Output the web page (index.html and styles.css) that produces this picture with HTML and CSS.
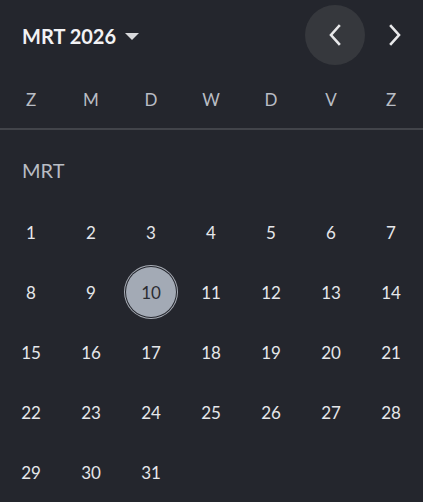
FILE: index.html
```html
<!DOCTYPE html>
<html>
<head>
<meta charset="utf-8">
<link rel="stylesheet" href="styles.css">
</head>
<body>
<div class="cal">
  <div class="header">
    <div class="title">MRT 2026 <span class="caret"></span></div>
    <div class="nav">
      <button class="navbtn prev" aria-label="vorige">
        <svg width="14" height="22" viewBox="0 0 14 22"><path d="M11 2 L3 11 L11 20" fill="none" stroke="#e8e8ea" stroke-width="2.6" stroke-linecap="square"/></svg>
      </button>
      <button class="navbtn next" aria-label="volgende">
        <svg width="14" height="22" viewBox="0 0 14 22"><path d="M3 2 L11 11 L3 20" fill="none" stroke="#e8e8ea" stroke-width="2.6" stroke-linecap="square"/></svg>
      </button>
    </div>
  </div>
  <div class="weekdays">
    <span>Z</span><span>M</span><span>D</span><span>W</span><span>D</span><span>V</span><span>Z</span>
  </div>
  <div class="month-label">MRT</div>
  <div class="days">
    <span class="day">1</span><span class="day">2</span><span class="day">3</span><span class="day">4</span><span class="day">5</span><span class="day">6</span><span class="day">7</span>
    <span class="day">8</span><span class="day">9</span><span class="day selected"><span class="dot">10</span></span><span class="day">11</span><span class="day">12</span><span class="day">13</span><span class="day">14</span>
    <span class="day">15</span><span class="day">16</span><span class="day">17</span><span class="day">18</span><span class="day">19</span><span class="day">20</span><span class="day">21</span>
    <span class="day">22</span><span class="day">23</span><span class="day">24</span><span class="day">25</span><span class="day">26</span><span class="day">27</span><span class="day">28</span>
    <span class="day">29</span><span class="day">30</span><span class="day">31</span>
  </div>
</div>
</body>
</html>
```
FILE: styles.css
```css
html, body {
  margin: 0;
  padding: 0;
  background: #24262d;
  overflow: hidden;
}
.cal {
  width: 423px;
  height: 502px;
  font-family: Lato, "Noto Sans", sans-serif;
  color: #e6e7ea;
}
.header {
  height: 70px;
  display: flex;
  align-items: center;
  justify-content: space-between;
  padding-left: 22px;
  margin-right: -2px;
}
.title {
  font-size: 20px;
  font-weight: 700;
  color: #f2f2f4;
  display: flex;
  align-items: center;
  gap: 9px;
  margin-top: 2px;
}
.caret {
  width: 0;
  height: 0;
  border-left: 7px solid transparent;
  border-right: 7px solid transparent;
  border-top: 7px solid #d8d9dc;
  margin-top: 1px;
}
.nav {
  display: flex;
}
.navbtn {
  width: 60px;
  height: 60px;
  border: none;
  border-radius: 50%;
  background: transparent;
  display: flex;
  align-items: center;
  justify-content: center;
  padding: 0;
}
.navbtn.prev {
  background: #36383d;
}
.weekdays {
  display: grid;
  grid-template-columns: repeat(7, 60px);
  padding-left: 1px;
  height: 58px;
  align-items: center;
  border-bottom: 2px solid #42444a;
  font-size: 17px;
  color: #b9bdc4;
  text-align: center;
}
.month-label {
  height: 72px;
  padding-left: 22px;
  padding-top: 8px;
  box-sizing: border-box;
  display: flex;
  align-items: center;
  font-size: 20px;
  color: #b9bdc4;
}
.days {
  display: grid;
  grid-template-columns: repeat(7, 60px);
  grid-auto-rows: 60px;
  padding-left: 1px;
  font-size: 17px;
}
.day {
  display: flex;
  align-items: center;
  justify-content: center;
}
.dot {
  width: 50px;
  height: 50px;
  border-radius: 50%;
  background: #a3aab5;
  color: #2b2d33;
  display: flex;
  align-items: center;
  justify-content: center;
  box-shadow: 0 0 0 1px #24262d, 0 0 0 2px #a9aeb7;
}
```
